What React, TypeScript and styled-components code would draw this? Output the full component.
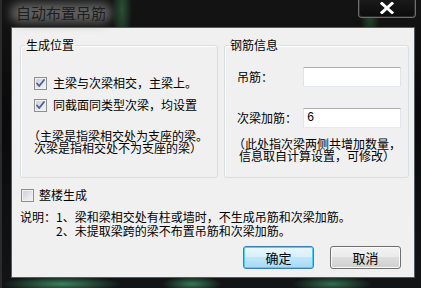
import React from "react";
import styled, { createGlobalStyle } from "styled-components";

const Global = createGlobalStyle`
  html, body { margin: 0; padding: 0; background: #000; }
  body { width: 421px; height: 288px; overflow: hidden; }
`;

const FONT = `"Noto Sans CJK SC", "Liberation Sans", sans-serif`;

const Window = styled.div`
  width: 421px;
  height: 288px;
  box-sizing: border-box;
  display: flex;
  flex-direction: column;
  font-family: ${FONT};
  font-size: 12px;
  color: #000;
  background:
    radial-gradient(ellipse 10px 40px at 120px 10px, rgba(80, 200, 120, 0.35), transparent),
    radial-gradient(ellipse 10px 40px at 368px 10px, rgba(80, 200, 120, 0.3), transparent),
    radial-gradient(ellipse 60px 8px at 60px 284px, rgba(90, 220, 150, 0.55), transparent),
    radial-gradient(ellipse 30px 8px at 190px 284px, rgba(90, 220, 150, 0.5), transparent),
    radial-gradient(ellipse 40px 8px at 330px 284px, rgba(90, 220, 150, 0.45), transparent),
    linear-gradient(180deg, #141414 0%, #0a0a0c 40%, #121416 100%);
  border-left: 2px solid #2b2b2b;
`;

const TitleBar = styled.div`
  height: 27px;
  display: flex;
  align-items: flex-start;
  padding-left: 8px;
`;

const Title = styled.div`
  position: relative;
  margin-top: 2px;
  font-size: 15px;
  line-height: 22px;
  color: #1e1e1e;
  padding: 0 6px;
  isolation: isolate;
  &::before {
    content: "";
    position: absolute;
    inset: 1px 0 1px 0;
    border-radius: 12px;
    background: rgba(120, 120, 120, 0.75);
    filter: blur(5px);
    z-index: -1;
  }
`;

const CloseButton = styled.div`
  margin-left: auto;
  margin-right: 5px;
  margin-top: -1px;
  width: 58px;
  height: 19px;
  box-sizing: border-box;
  border: 1px solid #6d6d6d;
  border-top: none;
  border-radius: 0 0 4px 4px;
  box-shadow: inset 0 0 0 1px rgba(255, 255, 255, 0.12);
  background: linear-gradient(180deg, #1a1a1a, #0c0c0c);
  display: flex;
  align-items: center;
  justify-content: center;
`;

const Client = styled.div`
  flex: 1;
  margin: 0 6px 10px 9px;
  border: 1px solid #555b62;
  background: #f0f0f0;
  display: flex;
  flex-direction: column;
`;

const GroupRow = styled.div`
  display: flex;
  gap: 6px;
  padding: 10px 5px 0 8px;
`;

const Group = styled.fieldset<{ $w: number }>`
  margin: 0;
  width: ${(p) => p.$w}px;
  height: 140px;
  box-sizing: border-box;
  border: 1px solid #d5dfe5;
  border-radius: 3px;
  box-shadow: inset 1px 1px 0 #fff;
  padding: 0;
  display: flex;
  flex-direction: column;
`;

const Legend = styled.legend`
  font-size: 12px;
  line-height: 14px;
  padding: 0 1px;
  margin-left: 4px;
`;

const LeftContent = styled.div`
  display: flex;
  flex-direction: column;
  padding: 23px 0 0 13px;
  gap: 6px;
`;

const CheckRow = styled.label`
  display: flex;
  align-items: center;
  gap: 6px;
  height: 16px;
  line-height: 16px;
  white-space: nowrap;
`;

const BoxWrap = styled.span`
  width: 13px;
  height: 13px;
  display: inline-flex;
`;

const Note = styled.div<{ $indent: number; $mt: number }>`
  margin-top: ${(p) => p.$mt}px;
  padding-left: ${(p) => p.$indent}px;
  text-indent: -6px;
  line-height: 12px;
  white-space: pre;
`;

const RightContent = styled.div`
  display: flex;
  flex-direction: column;
  padding: 15px 0 0 12px;
`;

const FieldRow = styled.div<{ $mt: number }>`
  display: flex;
  align-items: center;
  margin-top: ${(p) => p.$mt}px;
  height: 20px;
`;

const FieldLabel = styled.span`
  width: 66px;
  line-height: 14px;
  white-space: nowrap;
`;

const TextBox = styled.div`
  width: 98px;
  height: 20px;
  box-sizing: border-box;
  background: #fff;
  border: 1px solid #e2e3ea;
  border-top-color: #abadb3;
  border-bottom-color: #e3e9ef;
  border-radius: 1px;
  font-family: "Liberation Mono", monospace;
  font-size: 12px;
  line-height: 18px;
  padding-left: 3px;
`;

const FloorRow = styled(CheckRow)`
  margin: 9px 0 0 9px;
  gap: 5px;
`;

const Explain = styled.div`
  margin: 7px 0 0 8px;
  padding-left: 36px;
  text-indent: -36px;
  line-height: 14px;
  white-space: pre;
`;

const ButtonRow = styled.div`
  display: flex;
  justify-content: flex-end;
  gap: 16px;
  padding: 8px 13px 0 0;
`;

const Button = styled.div<{ $default?: boolean }>`
  width: 71px;
  height: 23px;
  box-sizing: border-box;
  border-radius: 3px;
  display: flex;
  align-items: center;
  justify-content: center;
  font-size: 13px;
  border: 1px solid ${(p) => (p.$default ? "#3c7fb1" : "#707070")};
  box-shadow: inset 0 0 0 1px ${(p) => (p.$default ? "#48d1fa" : "#fbfbfb")};
  background: ${(p) =>
    p.$default
      ? "linear-gradient(180deg, #eaf6fd 0%, #d9f0fc 48%, #bee6fd 50%, #a7d9f5 100%)"
      : "linear-gradient(180deg, #f2f2f2 0%, #ebebeb 48%, #dddddd 50%, #cfcfcf 100%)"};
`;

const CheckBox = ({ checked }: { checked: boolean }) => (
  <BoxWrap>
    <svg width="13" height="13" viewBox="0 0 13 13">
      <defs>
        <linearGradient id="cbg" x1="0" y1="0" x2="1" y2="1">
          <stop offset="0" stopColor="#cbcfd5" />
          <stop offset="1" stopColor="#f6f6f6" />
        </linearGradient>
      </defs>
      <rect x="0.5" y="0.5" width="12" height="12" fill="#f4f4f4" stroke="#8e8f8f" />
      <rect x="2" y="2" width="9" height="9" fill="url(#cbg)" stroke="#e4e4e4" strokeWidth="0.5" />
      {checked && (
        <path d="M3 6.5 L5.2 9 L10 3" fill="none" stroke="#4a5f97" strokeWidth="1.8" strokeLinecap="round" strokeLinejoin="round" />
      )}
    </svg>
  </BoxWrap>
);

export default function App() {
  return (
    <>
      <Global />
      <Window>
        <TitleBar>
          <Title>自动布置吊筋</Title>
          <CloseButton>
            <svg width="14" height="12" viewBox="0 0 14 12">
              <path d="M2 1.5 L12 10.5 M12 1.5 L2 10.5" stroke="#fff" strokeWidth="3" strokeLinecap="square" />
            </svg>
          </CloseButton>
        </TitleBar>
        <Client>
          <GroupRow>
            <Group $w={198}>
              <Legend>生成位置</Legend>
              <LeftContent>
                <CheckRow>
                  <CheckBox checked />
                  主梁与次梁相交，主梁上。
                </CheckRow>
                <CheckRow>
                  <CheckBox checked />
                  同截面同类型次梁，均设置
                </CheckRow>
                <Note $indent={0} $mt={11}>
                  {"（主梁是指梁相交处为支座的梁。\n次梁是指相交处不为支座的梁）"}
                </Note>
              </LeftContent>
            </Group>
            <Group $w={185}>
              <Legend>钢筋信息</Legend>
              <RightContent>
                <FieldRow $mt={0}>
                  <FieldLabel>吊筋：</FieldLabel>
                  <TextBox />
                </FieldRow>
                <FieldRow $mt={21}>
                  <FieldLabel>次梁加筋：</FieldLabel>
                  <TextBox>6</TextBox>
                </FieldRow>
                <Note $indent={2} $mt={10}>
                  {"（此处指次梁两侧共增加数量，\n信息取自计算设置，可修改）"}
                </Note>
              </RightContent>
            </Group>
          </GroupRow>
          <FloorRow>
            <CheckBox checked={false} />
            整楼生成
          </FloorRow>
          <Explain>
            {"说明：1、梁和梁相交处有柱或墙时，不生成吊筋和次梁加筋。\n2、未提取梁跨的梁不布置吊筋和次梁加筋。"}
          </Explain>
          <ButtonRow>
            <Button $default>确定</Button>
            <Button>取消</Button>
          </ButtonRow>
        </Client>
      </Window>
    </>
  );
}
